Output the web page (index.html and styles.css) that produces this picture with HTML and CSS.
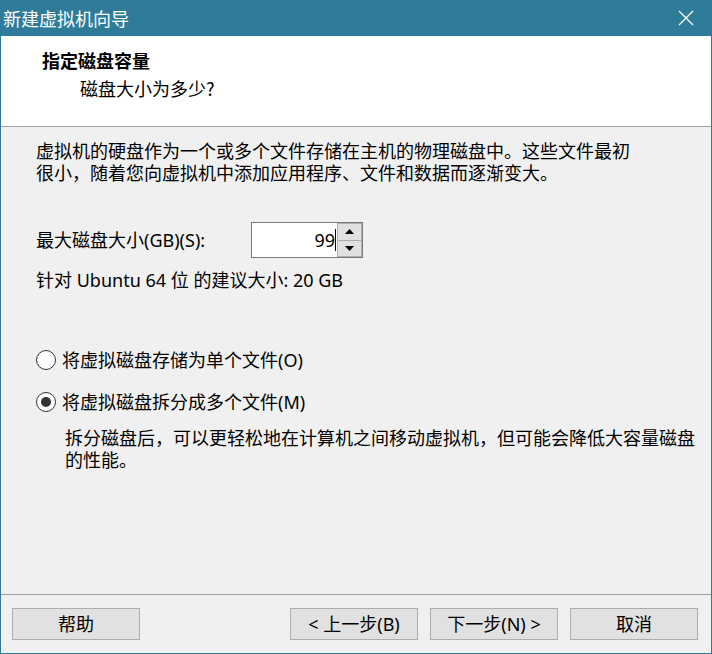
FILE: index.html
```html
<!DOCTYPE html>
<html lang="zh-CN">
<head>
<meta charset="utf-8">
<title>新建虚拟机向导</title>
<link rel="stylesheet" href="styles.css">
</head>
<body>
<div class="window">
  <div class="titlebar">
    <span class="title">新建虚拟机向导</span>
    <svg class="close" width="16" height="16" viewBox="0 0 16 16"><path d="M1 1 L15 15 M15 1 L1 15" stroke="#ffffff" stroke-width="1.2" fill="none"/></svg>
  </div>
  <div class="header">
    <div class="h-title">指定磁盘容量</div>
    <div class="h-sub">磁盘大小为多少?</div>
  </div>
  <div class="content">
    <p class="para">虚拟机的硬盘作为一个或多个文件存储在主机的物理磁盘中。这些文件最初<br>很小，随着您向虚拟机中添加应用程序、文件和数据而逐渐变大。</p>
    <div class="size-row">
      <span class="label">最大磁盘大小(GB)(S):</span>
      <div class="spin">
        <div class="spin-input"><span class="val">99</span><span class="caret"></span></div>
        <div class="spin-btns">
          <div class="spin-btn"><svg width="9" height="5" viewBox="0 0 9 5"><path d="M0 5 L4.5 0 L9 5 Z" fill="#000"/></svg></div>
          <div class="spin-btn"><svg width="9" height="5" viewBox="0 0 9 5"><path d="M0 0 L4.5 5 L9 0 Z" fill="#000"/></svg></div>
        </div>
      </div>
    </div>
    <p class="recommend">针对 Ubuntu 64 位 的建议大小: 20 GB</p>
    <div class="radios">
      <label class="radio"><span class="circle"></span><span>将虚拟磁盘存储为单个文件(O)</span></label>
      <label class="radio"><span class="circle checked"></span><span>将虚拟磁盘拆分成多个文件(M)</span></label>
      <p class="desc">拆分磁盘后，可以更轻松地在计算机之间移动虚拟机，但可能会降低大容量磁盘<br>的性能。</p>
    </div>
  </div>
  <div class="footer">
    <button class="btn">帮助</button>
    <div class="spacer"></div>
    <button class="btn">&lt; 上一步(B)</button>
    <button class="btn">下一步(N) &gt;</button>
    <button class="btn">取消</button>
  </div>
</div>
</body>
</html>
```

FILE: styles.css
```css
*, *::before, *::after {
  box-sizing: border-box;
}
html, body {
  margin: 0;
  padding: 0;
  background: #f0f0f0;
}
.window {
  width: 712px;
  height: 654px;
  border: 1px solid #2e7c9a;
  border-top: 0;
  display: flex;
  flex-direction: column;
  background: #f0f0f0;
  font-family: "Noto Sans", "Noto Sans CJK SC", sans-serif;
  color: #000;
  font-size: 17px;
}
.titlebar {
  flex: none;
  height: 36px;
  margin: 0 -1px;
  background: #2e7c9a;
  display: flex;
  align-items: center;
  justify-content: space-between;
  padding: 0 18px 0 3px;
}
.title {
  color: #fff;
  font-family: "Noto Sans CJK SC", sans-serif;
  font-size: 18px;
  line-height: 24px;
}
.close {
  display: block;
}
.header {
  flex: none;
  height: 91px;
  background: #fff;
  border-bottom: 1px solid #a0a0a0;
  padding: 12px 0 0 41px;
}
.h-title {
  font-family: "Noto Sans CJK SC", sans-serif;
  font-weight: bold;
  font-size: 18px;
  line-height: 24px;
}
.h-sub {
  font-family: "Noto Sans CJK SC", sans-serif;
  font-size: 18px;
  line-height: 24px;
  margin: 4px 0 0 38px;
}
.content {
  flex: 1;
  padding: 13px 0 0 35px;
}
.para {
  margin: 0;
  line-height: 22px;
  font-size: 18px;
}
.size-row {
  display: flex;
  align-items: center;
  margin-top: 38px;
  height: 36px;
}
.label {
  width: 215px;
  font-size: 18px;
  line-height: 22px;
}
.spin {
  display: flex;
  width: 112px;
  height: 36px;
  border: 1px solid #7a7a7a;
  background: #fff;
}
.spin-input {
  flex: 1;
  display: flex;
  justify-content: flex-end;
  align-items: center;
  padding-right: 1px;
  font-size: 18px;
}
.caret {
  display: inline-block;
  width: 1px;
  height: 22px;
  background: #000;
}
.spin-btns {
  width: 25px;
  display: flex;
  flex-direction: column;
  background: #f0f0f0;
}
.spin-btn {
  flex: 1;
  background: #e1e1e1;
  border: 1px solid #adadad;
  display: flex;
  align-items: center;
  justify-content: center;
}
.spin-btn + .spin-btn {
  border-top: 0;
}
.recommend {
  margin: 11px 0 0;
  font-size: 18px;
  line-height: 22px;
}
.radios {
  margin-top: 58px;
}
.radio {
  display: flex;
  align-items: center;
  height: 22px;
  font-size: 18px;
  line-height: 22px;
  margin-bottom: 20px;
}
.circle {
  width: 20px;
  height: 20px;
  border: 1px solid #333;
  border-radius: 50%;
  background: #fff;
  margin-right: 6px;
  display: flex;
  align-items: center;
  justify-content: center;
}
.circle.checked::after {
  content: "";
  width: 10px;
  height: 10px;
  border-radius: 50%;
  background: #333;
}
.desc {
  margin: -6px 0 0 29px;
  font-size: 18px;
  line-height: 22px;
}
.footer {
  flex: none;
  height: 59px;
  border-top: 1px solid #a0a0a0;
  display: flex;
  align-items: flex-start;
  padding: 13px 13px 0 11px;
  gap: 12px;
}
.spacer {
  flex: 1;
}
.btn {
  width: 128px;
  height: 32px;
  background: #e1e1e1;
  border: 1px solid #adadad;
  font-family: "Noto Sans", "Noto Sans CJK SC", sans-serif;
  font-size: 18px;
  color: #000;
  padding: 0;
  line-height: 30px;
}
```
